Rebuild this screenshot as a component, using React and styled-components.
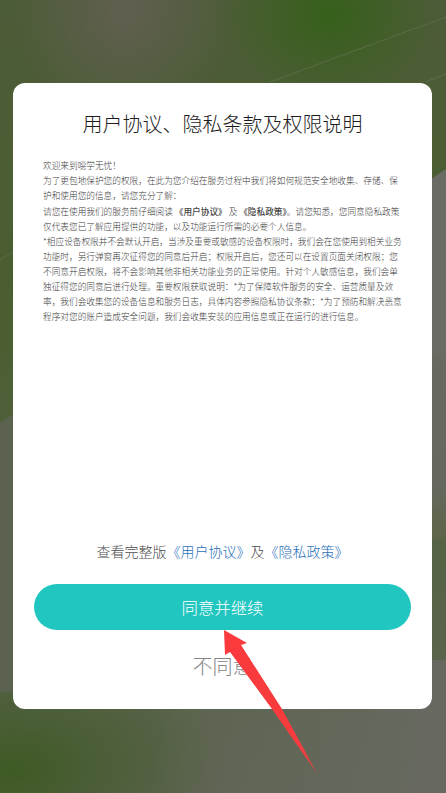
import styled, { createGlobalStyle } from "styled-components";

const Global = createGlobalStyle`
  html, body {
    margin: 0;
    padding: 0;
    height: 100%;
  }
  body {
    font-family: "Noto Sans CJK SC", "Liberation Sans", sans-serif;
  }
`;

const Screen = styled.div`
  position: relative;
  width: 446px;
  height: 793px;
  overflow: hidden;
  padding: 83px 14px 0 13px;
  box-sizing: border-box;
  background:
    radial-gradient(ellipse 110px 90px at 330px 15px, #36601a 0%, rgba(54, 96, 26, 0) 100%),
    radial-gradient(ellipse 110px 120px at 125px 10px, #605f50 0%, rgba(96, 95, 80, 0) 100%),
    radial-gradient(ellipse 220px 130px at 10px 770px, #3e5a24 0%, rgba(62, 90, 36, 0) 100%),
    linear-gradient(180deg, #4d5c38 0%, #4a5e30 40%, #566345 70%, #5f6454 100%);
`;

const Wallpaper = styled.svg`
  position: absolute;
  left: 0;
  top: 0;
`;

const Card = styled.div`
  position: relative;
  z-index: 1;
  height: 626px;
  background: #fff;
  border-radius: 12px;
  padding: 0 21px;
  box-sizing: border-box;
  display: flex;
  flex-direction: column;
`;

const Title = styled.h1`
  margin: 26px 0 0;
  font-size: 20px;
  font-weight: 300;
  line-height: 30px;
  text-align: center;
  color: #1c1c1c;
`;

const Body = styled.div`
  margin: 19px 9px 0;
  font-size: 8.66px;
  font-weight: 300;
  line-height: 15px;
  color: #3a3a3a;
  flex: 1;
`;

const Para = styled.p`
  margin: 0 0 ${(p) => p.$gap || 0}px;
`;

const Strong = styled.b`
  font-weight: 500;
  color: #444;
`;

const LinkLine = styled.div`
  font-size: 14px;
  font-weight: 300;
  line-height: 20px;
  text-align: center;
  color: #4d4d4d;
`;

const Link = styled.span`
  color: #1f6fb8;
`;

const AgreeButton = styled.button`
  margin: 23px 0 0;
  height: 46px;
  width: 377px;
  border: 0;
  border-radius: 23px;
  background: #22c6c0;
  color: #fff;
  font: inherit;
  font-size: 16.4px;
  font-weight: 300;
`;

const Decline = styled.div`
  margin: 21px 0 28px;
  font-size: 20px;
  font-weight: 300;
  line-height: 30px;
  text-align: center;
  color: #858585;
`;

const Arrow = styled.svg`
  position: absolute;
  z-index: 2;
  left: 0;
  top: 0;
  pointer-events: none;
`;

export default function App() {
  return (
    <>
      <Global />
      <Screen>
        <Wallpaper width="446" height="793" viewBox="0 0 446 793">
          <defs>
            <linearGradient id="rightBand" x1="0" y1="0" x2="0" y2="1">
              <stop offset="0" stopColor="#686a60" />
              <stop offset="0.7" stopColor="#666860" />
              <stop offset="1" stopColor="#5c6548" />
            </linearGradient>
            <linearGradient id="lowerRight" x1="0" y1="0" x2="1" y2="0">
              <stop offset="0" stopColor="#666a5c" stopOpacity="0" />
              <stop offset="1" stopColor="#676960" />
            </linearGradient>
          </defs>
          <rect x="150" y="660" width="296" height="133" fill="url(#lowerRight)" />
          <rect x="420" y="340" width="26" height="200" fill="url(#rightBand)" />
          <circle cx="500" cy="265" r="110" fill="#6a6b64" />
          <path d="M0 423 L20 410 L20 690 L0 693 Z" fill="#5b6350" />
          <path d="M0 260 L20 248" stroke="#5c6b48" strokeWidth="1" />
          <path d="M270 82 L446 17" stroke="#5c6b48" strokeWidth="1" />
          <path d="M425 82 L446 74" stroke="#5f6c4e" strokeWidth="1" />
        </Wallpaper>
        <Card>
          <Title>用户协议、隐私条款及权限说明</Title>
          <Body>
            <Para>欢迎来到噁学无忧！</Para>
            <Para $gap={1}>为了更包地保护您的权限，在此为您介绍在服务过程中我们将如何规范安全地收集、存储、保护和使用您的信息，请您充分了解：</Para>
            <Para>请您在使用我们的服务前仔细阅读 <Strong>《用户协议》</Strong> 及 <Strong>《隐私政策》</Strong>。请您知悉，您同意隐私政策仅代表您已了解应用提供的功能，以及功能运行所需的必要个人信息。</Para>
            <Para>*相应设备权限并不会默认开启，当涉及重要或敏感的设备权限时，我们会在您使用到相关业务功能时，另行弹窗再次征得您的同意后开启；权限开启后，您还可以在设置页面关闭权限；您不同意开启权限，将不会影响其他非相关功能业务的正常使用。针对个人敏感信息，我们会单独征得您的同意后进行处理。重要权限获取说明：*为了保障软件服务的安全、运营质量及效率，我们会收集您的设备信息和服务日志，具体内容参照隐私协议条款；*为了预防和解决恶意程序对您的账户造成安全问题，我们会收集安装的应用信息或正在运行的进行信息。</Para>
          </Body>
          <LinkLine>查看完整版<Link>《用户协议》</Link>及<Link>《隐私政策》</Link></LinkLine>
          <AgreeButton>同意并继续</AgreeButton>
          <Decline>不同意</Decline>
        </Card>
        <Arrow width="446" height="793" viewBox="0 0 446 793">
          <defs>
            <linearGradient id="arrowFade" x1="224" y1="630" x2="318" y2="775" gradientUnits="userSpaceOnUse">
              <stop offset="0" stopColor="#fb3a3c" />
              <stop offset="0.85" stopColor="#f53c3e" />
              <stop offset="1" stopColor="#a8584e" />
            </linearGradient>
          </defs>
          <path d="M224 630 L247 643 L241 645 L282 709 L318 775 L272 709 L230 652 L225 655 Z" fill="url(#arrowFade)" />
        </Arrow>
      </Screen>
    </>
  );
}
